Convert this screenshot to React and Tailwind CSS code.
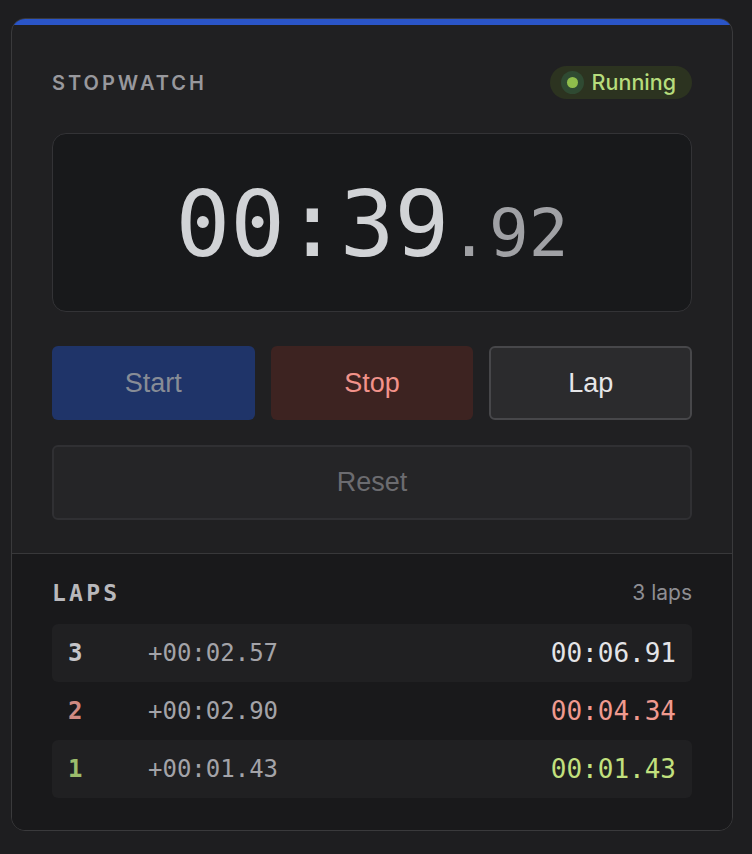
import React from "react";

const laps = [
  { n: 3, split: "+00:02.57", total: "00:06.91", num: "text-[#c4c4c8]", tot: "text-[#e4e4e7]" },
  { n: 2, split: "+00:02.90", total: "00:04.34", num: "text-[#d08a82]", tot: "text-[#f09a8f]" },
  { n: 1, split: "+00:01.43", total: "00:01.43", num: "text-[#9cbc6c]", tot: "text-[#c2e07e]" },
];

const sans = "font-['Inter','Liberation_Sans',sans-serif]";
const btn = "font-['Liberation_Sans','Arial',sans-serif]";
const mono = "font-['DejaVu_Sans_Mono','Liberation_Mono',monospace] slashed-zero";

export default function App() {
  return (
    <div className="min-h-screen bg-[#1e1e20] pt-[18px] pl-[11px]">
      <div className="w-[722px] rounded-[14px] border border-[#3a3a3c] overflow-hidden bg-[#202022]">
        <div className="h-[6px] bg-[#2a55c8]" />

        <div className="px-10 pt-[41px] pb-[33px]">
          <div className="flex h-[33px] items-center justify-between">
            <span className={`${sans} text-[20px] font-semibold tracking-[0.15em] text-[#98989d]`}>
              STOPWATCH
            </span>
            <span className="flex h-[33px] items-center gap-[8px] rounded-full bg-[#2c3320] pl-[11px] pr-[16px]">
              <span className="flex h-[23px] w-[23px] items-center justify-center rounded-full bg-[#2f4a32]">
                <span className="h-[11px] w-[11px] rounded-full bg-[#8fbd4c]" />
              </span>
              <span className={`${sans} text-[21.5px] font-medium text-[#b6dc7c]`}>Running</span>
            </span>
          </div>

          <div className="mt-[34px] flex h-[179px] items-center justify-center rounded-[14px] border border-[#333336] bg-[#18191b]">
            <div className={`${mono} flex items-baseline pt-[4px]`}>
              <span className="text-[91px] leading-none text-[#d1d3d6]">00:39</span>
              <span className="text-[66px] leading-none text-[#a0a1a5]">.92</span>
            </div>
          </div>

          <div className="mt-[34px] grid h-[74px] grid-cols-3 gap-4">
            <button className={`${btn} rounded-[6px] bg-[#1f3469] text-[27px] text-[#878c96]`}>Start</button>
            <button className={`${btn} rounded-[6px] bg-[#3d2321] text-[27px] text-[#f2928a]`}>Stop</button>
            <button className={`${btn} rounded-[6px] border-2 border-[#47474a] bg-[#2b2b2d] text-[27px] text-[#e6e6e8]`}>
              Lap
            </button>
          </div>

          <button className={`${btn} mt-[25px] h-[75px] w-full rounded-[6px] border-2 border-[#303033] bg-[#252527] text-[27px] text-[#6c6c70]`}>
            Reset
          </button>
        </div>

        <div className="border-t border-[#38383a] bg-[#19191b] px-10 pt-[25px] pb-[32px]">
          <div className="mb-[17px] flex h-[28px] items-center justify-between">
            <span className={`${mono} text-[23px] font-bold tracking-[0.14em] text-[#b8b8bc]`}>LAPS</span>
            <span className={`${sans} text-[21px] text-[#8e8e93]`}>3 laps</span>
          </div>

          {laps.map((lap, i) => (
            <div
              key={lap.n}
              className={`flex h-[58px] items-center rounded-[6px] px-4 ${mono} ${i % 2 === 0 ? "bg-[#202022]" : ""}`}
            >
              <span className={`w-[80px] text-[24px] font-bold ${lap.num}`}>{lap.n}</span>
              <span className="flex-1 text-[24px] text-[#a3a3a8]">{lap.split}</span>
              <span className={`text-[26px] ${lap.tot}`}>{lap.total}</span>
            </div>
          ))}
        </div>
      </div>
    </div>
  );
}
